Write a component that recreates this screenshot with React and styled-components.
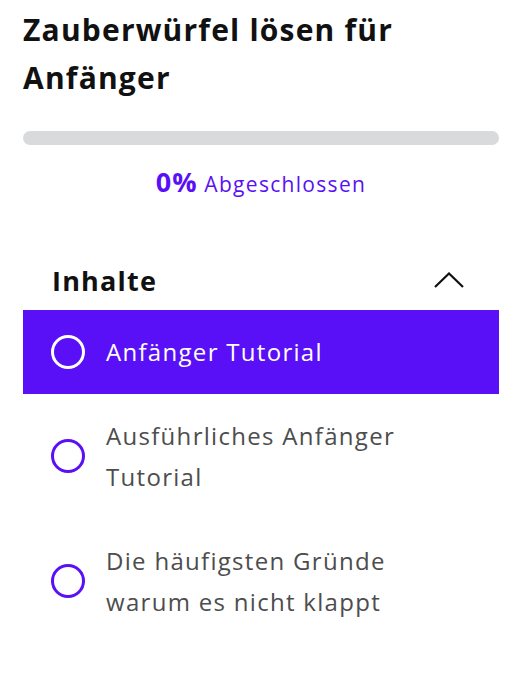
import styled, { createGlobalStyle } from 'styled-components';

const GlobalStyle = createGlobalStyle`
  * {
    box-sizing: border-box;
  }
  body {
    margin: 0;
    padding: 0;
    background: #fff;
    font-family: "Open Sans", "Noto Sans", sans-serif;
  }
`;

const Sidebar = styled.aside`
  width: 522px;
  padding: 6px 23px 0;
`;

const Title = styled.h1`
  margin: 0;
  font-size: 30px;
  line-height: 48px;
  font-weight: 700;
  color: #111;
  letter-spacing: 1.2px;
`;

const Track = styled.div`
  margin-top: 29px;
  height: 14px;
  border-radius: 7px;
  background: #d9dadc;
  overflow: hidden;
`;

const Fill = styled.div`
  height: 100%;
  background: #5a10f6;
`;

const Status = styled.p`
  margin: 22px 0 0;
  text-align: center;
  color: #5a10f6;
  font-size: 21px;
  line-height: 30px;
  letter-spacing: 1.3px;

  strong {
    font-size: 27px;
    font-weight: 700;
    letter-spacing: 1px;
  }
`;

const Header = styled.div`
  margin-top: 51px;
  height: 60px;
  padding: 0 35px 0 29px;
  display: flex;
  align-items: center;
  justify-content: space-between;
`;

const HeaderTitle = styled.h2`
  margin: 0;
  font-size: 27px;
  font-weight: 700;
  color: #111;
  letter-spacing: 1.2px;
`;

const List = styled.ul`
  list-style: none;
  margin: 0;
  padding: 0;
`;

const Item = styled.li`
  display: flex;
  align-items: center;
  gap: 21px;
  padding: 21px 80px 22px 28px;
  background: ${p => (p.$active ? '#5a10f6' : 'transparent')};
  color: ${p => (p.$active ? '#fff' : '#4d4d4d')};
  font-size: 24px;
  line-height: 41px;
  letter-spacing: 1.3px;
`;

const Ring = styled.span`
  flex: none;
  width: 34px;
  height: 34px;
  border-radius: 50%;
  border: 3px solid ${p => (p.$active ? '#fff' : '#5a10f6')};
`;

const lessons = [
  { title: 'Anfänger Tutorial', active: true },
  { title: 'Ausführliches Anfänger Tutorial' },
  { title: 'Die häufigsten Gründe warum es nicht klappt' },
];

export default function App() {
  const progress = 0;

  return (
    <>
      <GlobalStyle />
      <Sidebar>
        <Title>Zauberwürfel lösen für Anfänger</Title>
        <Track>
          <Fill style={{ width: `${progress}%` }} />
        </Track>
        <Status>
          <strong>{progress}%</strong> Abgeschlossen
        </Status>
        <Header>
          <HeaderTitle>Inhalte</HeaderTitle>
          <svg width="30" height="16" viewBox="0 0 30 16" fill="none">
            <path d="M1 15L15 1.5L29 15" stroke="#111" strokeWidth="2.2" />
          </svg>
        </Header>
        <List>
          {lessons.map(l => (
            <Item key={l.title} $active={l.active}>
              <Ring $active={l.active} />
              <span>{l.title}</span>
            </Item>
          ))}
        </List>
      </Sidebar>
    </>
  );
}
